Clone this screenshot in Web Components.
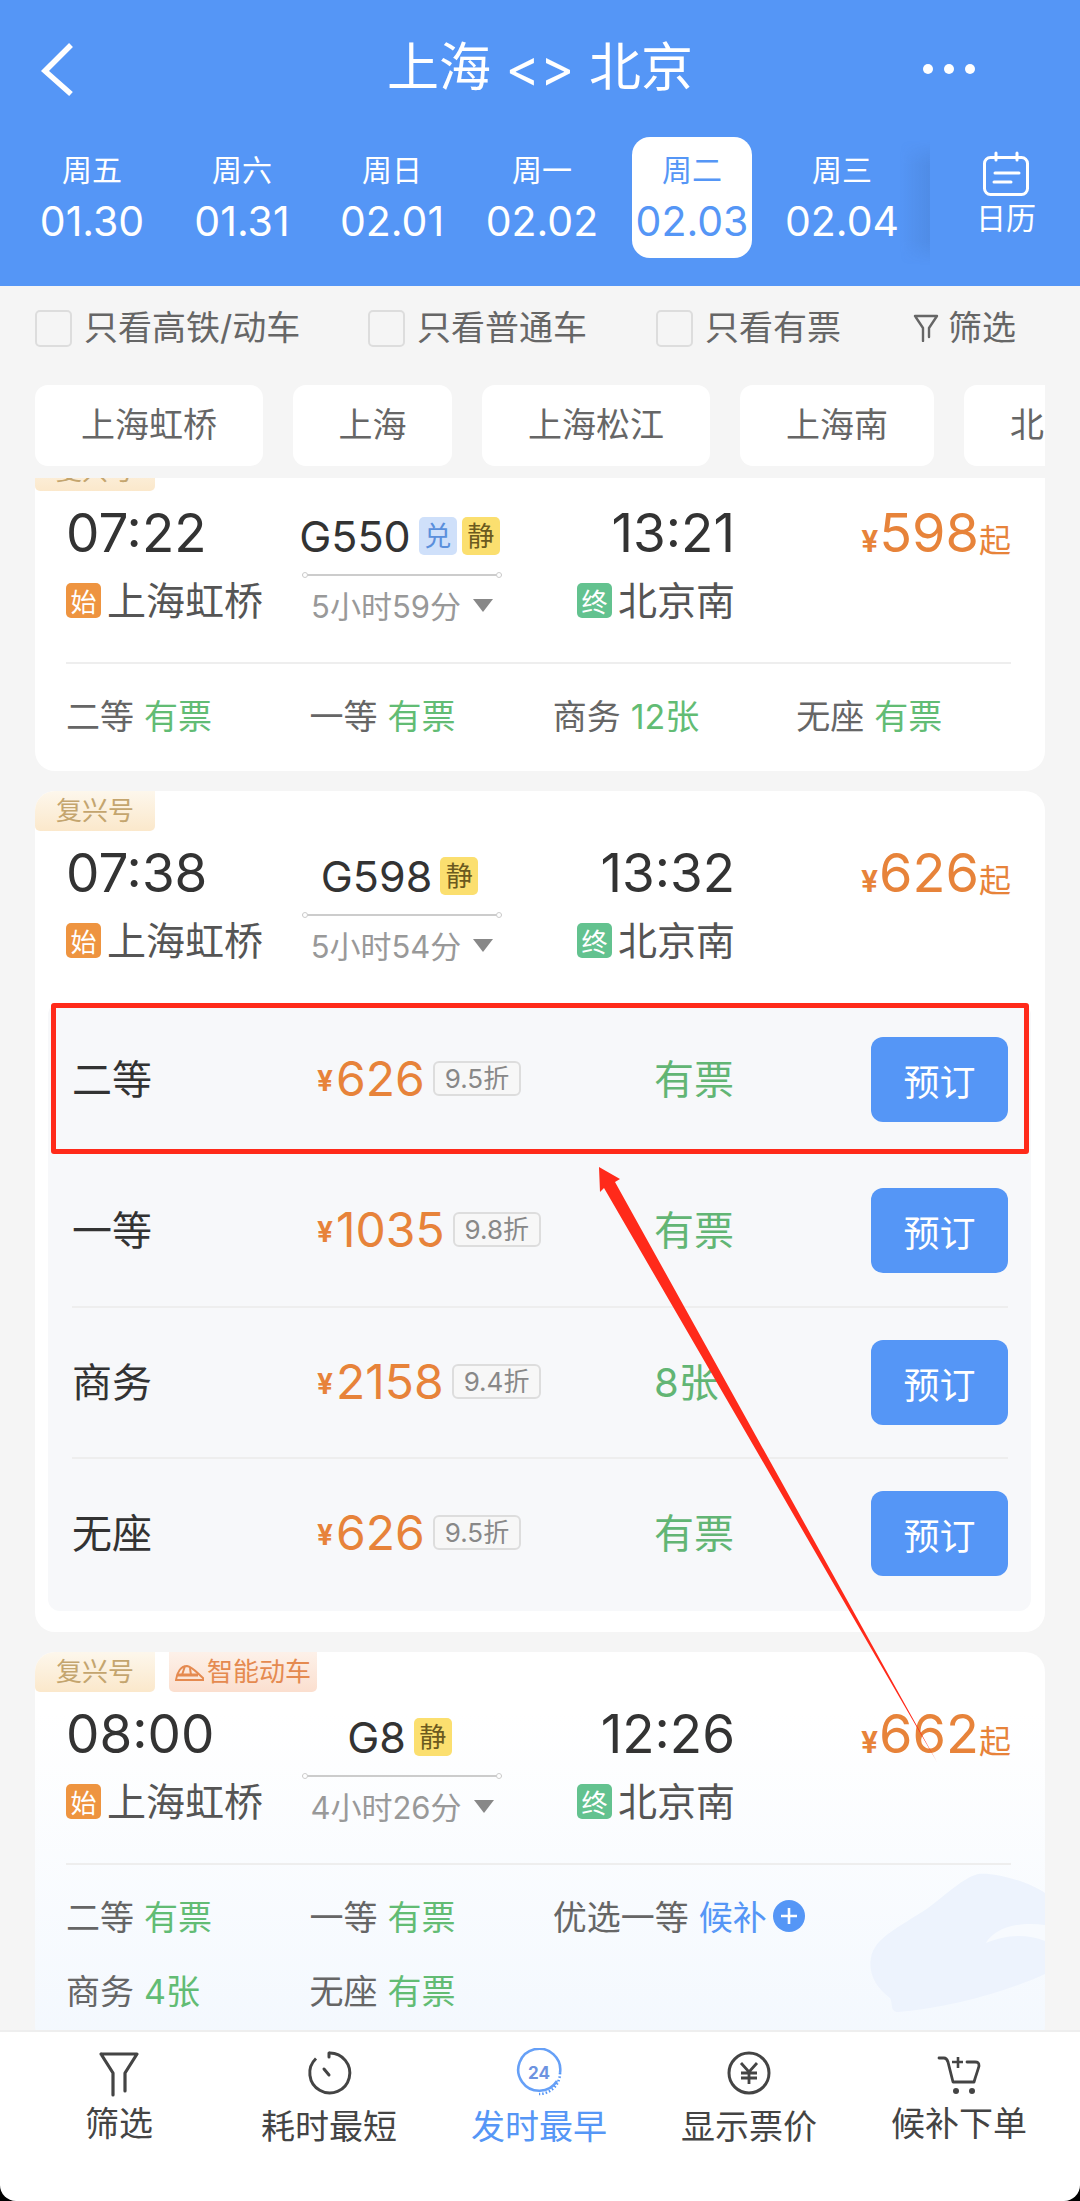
<!DOCTYPE html>
<html lang="zh">
<head>
<meta charset="utf-8">
<title>上海 <> 北京</title>
<style>
  html, body { margin: 0; padding: 0; background: #000; }
  body { width: 1080px; height: 2201px; overflow: hidden; font-family: Inter, "Noto Sans CJK SC", sans-serif; }
</style>
</head>
<body>
<train-app>
  <top-header slot="header">
    <date-tab week="周五" date="01.30"></date-tab>
    <date-tab week="周六" date="01.31"></date-tab>
    <date-tab week="周日" date="02.01"></date-tab>
    <date-tab week="周一" date="02.02"></date-tab>
    <date-tab week="周二" date="02.03" active></date-tab>
    <date-tab week="周三" date="02.04"></date-tab>
  </top-header>

  <filter-bar slot="filters"></filter-bar>

  <station-strip slot="stations">
    <station-chip style="width:228px">上海虹桥</station-chip>
    <station-chip style="width:159px">上海</station-chip>
    <station-chip style="width:228px">上海松江</station-chip>
    <station-chip style="width:194px">上海南</station-chip>
    <station-chip style="width:194px">北京南</station-chip>
  </station-strip>

  <train-card dep="07:22" no="G550" arr="13:21" dur="5小时59分" price="598" marks="兑,静" style="margin-top:-27px">
    <seat-grid>
      <seat-cell name="二等" left="有票"></seat-cell>
      <seat-cell name="一等" left="有票"></seat-cell>
      <seat-cell name="商务" left="12张"></seat-cell>
      <seat-cell name="无座" left="有票"></seat-cell>
    </seat-grid>
  </train-card>

  <train-card dep="07:38" no="G598" arr="13:32" dur="5小时54分" price="626" marks="静">
    <seat-panel>
      <seat-row name="二等" price="626" off="9.5折" left="有票"></seat-row>
      <seat-row name="一等" price="1035" off="9.8折" left="有票"></seat-row>
      <seat-row name="商务" price="2158" off="9.4折" left="8张"></seat-row>
      <seat-row name="无座" price="626" off="9.5折" left="有票"></seat-row>
    </seat-panel>
  </train-card>

  <train-card dep="08:00" no="G8" arr="12:26" dur="4小时26分" price="662" marks="静" smart>
    <seat-grid>
      <seat-cell name="二等" left="有票"></seat-cell>
      <seat-cell name="一等" left="有票"></seat-cell>
      <seat-cell name="优选一等" left="候补" wait></seat-cell>
      <seat-cell name="商务" left="4张" newrow></seat-cell>
      <seat-cell name="无座" left="有票"></seat-cell>
    </seat-grid>
  </train-card>

  <bottom-nav slot="nav">
    <nav-item icon="filter" raised>筛选</nav-item>
    <nav-item icon="clock">耗时最短</nav-item>
    <nav-item icon="early" active>发时最早</nav-item>
    <nav-item icon="yen">显示票价</nav-item>
    <nav-item icon="cart" raised>候补下单</nav-item>
  </bottom-nav>

  <red-annotation slot="overlay"></red-annotation>
</train-app>

<script>
const FONT = 'Inter, "Noto Sans CJK SC", sans-serif';
const BLUE = "#5596f6";

// small helper, every element here is template + open shadow root
function define(name, html, Base) {
  const tpl = document.createElement("template");
  tpl.innerHTML = html;
  class El extends (Base || HTMLElement) {
    constructor() {
      super();
      this.attachShadow({ mode: "open" });
      this.shadowRoot.appendChild(tpl.content.cloneNode(true));
    }
    connectedCallback() {
      if (this.render) this.render();
    }
    $(sel) {
      return this.shadowRoot.querySelector(sel);
    }
  }
  return El;
}

customElements.define("train-app", define("train-app", `
  <style>
    :host { display: block; position: relative; width: 1080px; height: 2201px; background: #000; font-family: ${FONT}; overflow: hidden; }
    .page { display: flex; flex-direction: column; height: 2201px; }
    .main { background: #f5f5f5; display: flex; flex-direction: column; flex: none; height: 2030px; overflow: hidden; }
    .list { flex: 1; min-height: 0; margin: 12px 35px 0; overflow: hidden; display: flex; flex-direction: column; gap: 20px; }
  </style>
  <div class="page">
    <div class="main">
      <slot name="header"></slot>
      <slot name="filters"></slot>
      <slot name="stations"></slot>
      <div class="list"><slot></slot></div>
    </div>
    <slot name="nav"></slot>
  </div>
  <slot name="overlay"></slot>
`));

customElements.define("top-header", define("top-header", `
  <style>
    :host { display: block; height: 286px; background: ${BLUE}; color: #fff; flex: none; }
    .bar { height: 137px; display: flex; align-items: center; justify-content: space-between; padding: 0 105px 0 36px; box-sizing: border-box; }
    .back { width: 42px; height: 56px; display: block; }
    .title { font-size: 52px; line-height: 60px; position: absolute; left: 0; right: 0; text-align: center; margin-top: -2px; }
    .dots { display: flex; gap: 11px; }
    .dots i { width: 10px; height: 10px; border-radius: 50%; background: #fff; display: block; }
    .dates { display: flex; padding-left: 32px; gap: 30px; height: 121px; align-items: center; }
    .cal { position: relative; width: 150px; height: 121px; margin-left: -2px; display: flex; flex-direction: column; align-items: center; box-sizing: border-box; padding: 13px 0 0 2px; flex: none; }
    .cal::before { content: ""; position: absolute; left: -30px; top: 3px; width: 30px; height: 125px; background: linear-gradient(90deg, rgba(50,85,140,0), rgba(50,85,140,.15)); -webkit-mask-image: linear-gradient(transparent, #000 20%, #000 80%, transparent); }
    .cal svg { display: block; }
    .cal span { font-size: 30px; line-height: 40px; white-space: nowrap; }
  </style>
  <div class="bar">
    <svg class="back" viewBox="0 0 42 56" fill="none" stroke="#fff" stroke-width="5.5"><path d="M35 4 L9 30 L35 53"/></svg>
    <div class="title">上海 &lt;&gt; 北京</div>
    <div class="dots"><i></i><i></i><i></i></div>
  </div>
  <div class="dates">
    <slot></slot>
    <div class="cal">
      <svg width="50" height="48" viewBox="0 0 50 48" fill="none" stroke="#fff" stroke-width="3" stroke-linecap="round">
        <rect x="3.500" y="7.500" width="43" height="37" rx="6"/>
        <path d="M15 3v7M36 3v7M14 23h24M13 32h17"/>
      </svg>
      <span>日历</span>
    </div>
  </div>
`));

class DateTab extends define("date-tab", `
  <style>
    :host { display: flex; flex-direction: column; align-items: center; width: 120px; height: 121px; border-radius: 18px; flex: none; color: #fff; }
    :host([active]) { background: #fff; color: ${BLUE}; }
    .w { font-size: 30px; line-height: 36px; margin-top: 15px; }
    .d { font-size: 41px; line-height: 46px; margin-top: 10px; white-space: nowrap; }
  </style>
  <div class="w"></div><div class="d"></div>
`) {
  render() {
    this.$(".w").textContent = this.getAttribute("week");
    this.$(".d").textContent = this.getAttribute("date");
  }
}
customElements.define("date-tab", DateTab);

customElements.define("filter-bar", define("filter-bar", `
  <style>
    :host { display: flex; height: 84px; align-items: center; flex: none; font-size: 34px; color: #666; padding-left: 35px; }
    .c { display: flex; align-items: center; gap: 12px; white-space: nowrap; flex: none; }
    .c i { display: block; width: 37px; height: 37px; box-sizing: border-box; border: 2px solid #ddd; border-radius: 5px; }
    .c span, .f span { padding-bottom: 6px; }
    .f { display: flex; align-items: center; gap: 9px; white-space: nowrap; flex: none; }
    .w1 { width: 333px; }
    .w2 { width: 288px; }
    .w3 { width: 257px; }
  </style>
  <div class="c w1"><i></i><span>只看高铁/动车</span></div>
  <div class="c w2"><i></i><span>只看普通车</span></div>
  <div class="c w3"><i></i><span>只看有票</span></div>
  <div class="f">
    <svg width="26" height="28" viewBox="0 0 26 28" fill="none" stroke="#666" stroke-width="2.400" stroke-linejoin="round" stroke-linecap="round"><path d="M2 2H24L16 14V23M10 27V14L2 2"/></svg>
    <span>筛选</span>
  </div>
`));

customElements.define("station-strip", define("station-strip", `
  <style>
    :host { display: block; flex: none; margin: 15px 35px 0; width: 1010px; overflow: hidden; }
    .row { display: flex; gap: 30px; height: 81px; }
  </style>
  <div class="row"><slot></slot></div>
`));

customElements.define("station-chip", define("station-chip", `
  <style>
    :host { display: flex; flex: none; align-items: center; justify-content: center; box-sizing: border-box; padding-bottom: 6px; height: 81px; background: #fff; border-radius: 13px; font-size: 34px; color: #666; white-space: nowrap; }
  </style>
  <slot></slot>
`));

class TrainCard extends define("train-card", `
  <style>
    :host { display: block; flex: none; position: relative; background: #fff; border-radius: 20px; overflow: hidden; }
    :host([smart]) { background: linear-gradient(#fff 60px, #f3f8fe 400px); }
    .tags { display: flex; height: 40px; gap: 14px; position: relative; }
    .tag { display: flex; align-items: center; justify-content: center; font-size: 26px; box-sizing: border-box; padding-bottom: 5px; height: 40px; border-radius: 0 0 5px 5px; white-space: nowrap; }
    .fx { width: 120px; color: #c4a56e; background: linear-gradient(#fdf7ec, #fbe8cb); }
    .zn { width: 148px; color: #e58a50; background: linear-gradient(#fdf1e9, #fbdfcf); gap: 3px; display: none; }
    .zn svg { margin-top: 6px; }
    :host([smart]) .zn { display: flex; }
    .top { display: grid; grid-template-columns: 236px 200px 233px 310px; padding-left: 31px; margin-top: 17px; height: 154px; position: relative; }
    .time { font-size: 53px; line-height: 50px; height: 50px; color: #333; white-space: nowrap; }
    .station { display: flex; align-items: center; height: 40px; margin-top: 23px; font-size: 39px; color: #555; white-space: nowrap; gap: 6px; }
    .station span { padding-bottom: 6px; }
    .station i { font-style: normal; display: flex; align-items: center; justify-content: center; width: 35px; height: 35px; border-radius: 5px; color: #fff; font-size: 26px; margin-top: -2px; }
    .dep { background: #ee9440; }
    .end { background: #63c28f; }
    .arr { display: flex; flex-direction: column; align-items: flex-end; }
    .mid { display: flex; flex-direction: column; align-items: center; }
    .no { display: flex; align-items: center; height: 56px; font-size: 43px; color: #333; margin-right: 5px; white-space: nowrap; }
    .m { display: flex; align-items: center; justify-content: center; box-sizing: border-box; padding-bottom: 3px; width: 38px; height: 38px; border-radius: 5px; font-size: 27px; background: #fbdf6f; color: #6b5a20; margin-left: 8px; }
    .m + .m { margin-left: 5px; }
    .m.dui { background: #cfe0fa; color: #5a8fdc; }
    .line { width: 200px; height: 2px; background: #ccc; margin-top: 10px; position: relative; }
    .line::before, .line::after { content: ""; position: absolute; top: -2px; width: 6px; height: 6px; box-sizing: border-box; border: 1px solid #ccc; border-radius: 50%; background: #fff; }
    .line::before { left: 0; }
    .line::after { right: 0; }
    .dur { display: flex; align-items: center; gap: 12px; height: 40px; font-size: 31px; color: #999; margin-top: 11px; white-space: nowrap; }
    .dur span { padding-bottom: 5px; }
    .dur b { display: block; width: 0; height: 0; border-left: 10px solid transparent; border-right: 10px solid transparent; border-top: 13px solid #888; margin-top: -4px; }
    .price { display: flex; justify-content: flex-end; align-items: baseline; padding-right: 34px; height: 50px; line-height: 50px; color: #e7833a; white-space: nowrap; }
    .price small { font-size: 30px; font-weight: 700; margin-right: 1px; }
    .price span { font-size: 54px; }
    .price em { font-style: normal; font-size: 32px; }
    .bg { display: none; position: absolute; right: 0; top: 221px; }
    :host([smart]) .bg { display: block; }
    .slot { position: relative; display: block; }
  </style>
  <svg class="bg" width="177" height="140" viewBox="0 0 177 140"><path d="M110 1C125 -1 160 8 177 20L177 101C140 118 80 135 30 139C22 139 25 130 22 125C8 115 0 100 3 85C6 65 30 55 60 35C80 20 95 5 110 1Z" fill="#edf3fd"/><path d="M118 70C126 56 148 48 177 52L177 68C158 60 136 62 118 70Z" fill="#f7fafe"/></svg>
  <div class="tags">
    <div class="tag fx">复兴号</div>
    <div class="tag zn">
      <svg width="29" height="18" viewBox="0 0 29 18" fill="none" stroke="#e58a50" stroke-width="2"><path d="M1 16C2 8 6 2 12 2C18 3 23 10 28 14V16Z"/><path d="M2 11H23" stroke-width="3"/><path d="M10 2L7 11M15 4L16 11"/></svg>
      智能动车
    </div>
  </div>
  <div class="top">
    <div>
      <div class="time d"></div>
      <div class="station"><i class="dep">始</i><span>上海虹桥</span></div>
    </div>
    <div class="mid">
      <div class="no"></div>
      <div class="line"></div>
      <div class="dur"><span></span><b></b></div>
    </div>
    <div class="arr">
      <div class="time a"></div>
      <div class="station"><i class="end">终</i><span>北京南</span></div>
    </div>
    <div class="price"><small>¥</small><span></span><em>起</em></div>
  </div>
  <slot class="slot"></slot>
`) {
  render() {
    this.$(".time.d").textContent = this.getAttribute("dep");
    this.$(".time.a").textContent = this.getAttribute("arr");
    this.$(".dur span").textContent = this.getAttribute("dur");
    this.$(".price span").textContent = this.getAttribute("price");
    const no = this.$(".no");
    no.textContent = this.getAttribute("no");
    this.getAttribute("marks").split(",").forEach((m) => {
      const d = document.createElement("div");
      d.className = m === "兑" ? "m dui" : "m";
      d.textContent = m;
      no.appendChild(d);
    });
  }
}
customElements.define("train-card", TrainCard);

customElements.define("seat-grid", define("seat-grid", `
  <style>
    :host { display: block; margin: 0 34px 0 31px; border-top: 2px solid #eee; padding: 15px 0 18px; }
    .g { display: grid; grid-template-columns: repeat(4, 243.4px); grid-auto-rows: 74px; }
  </style>
  <div class="g"><slot></slot></div>
`));

class SeatCell extends define("seat-cell", `
  <style>
    :host { display: flex; align-items: center; gap: 10px; font-size: 34px; color: #666; white-space: nowrap; padding-bottom: 3px; box-sizing: border-box; }
    :host([newrow]) { grid-column: 1; }
    :host([wait]) { grid-column: span 2; }
    .v { color: #62bc74; }
    :host([wait]) .v { color: ${BLUE}; }
    svg { display: none; margin-left: -4px; }
    :host([wait]) svg { display: block; }
  </style>
  <span class="n"></span><span class="v"></span>
  <svg width="32" height="32" viewBox="0 0 32 32"><circle cx="16" cy="16" r="16" fill="${BLUE}"/><path d="M8 16H24M16 8V24" stroke="#fff" stroke-width="2.600"/></svg>
`) {
  render() {
    this.$(".n").textContent = this.getAttribute("name");
    this.$(".v").textContent = this.getAttribute("left");
  }
}
customElements.define("seat-cell", SeatCell);

customElements.define("seat-panel", define("seat-panel", `
  <style>
    :host { display: block; margin: 1px 14px 21px 13px; background: #f7f8fa; border-radius: 12px; padding: 1px 0 3px; }
  </style>
  <slot></slot>
`));

class SeatRow extends define("seat-row", `
  <style>
    :host { display: block; padding: 0 23px 0 24px; }
    .r { display: grid; grid-template-columns: 245px 337px 217px 137px; height: 151px; align-items: center; box-sizing: border-box; }
    :host(:nth-child(n+3)) .r { border-top: 2px solid #eeeeee; height: 151px; }
    .n { font-size: 40px; color: #333; padding-bottom: 6px; }
    .p { display: flex; align-items: center; color: #e7833a; white-space: nowrap; padding-bottom: 3px; }
    .p small { font-size: 28px; font-weight: 700; margin-top: 5px; margin-right: 3px; }
    .p span { font-size: 48px; }
    .off { margin-left: 8px; display: flex; align-items: center; padding: 0 10px 3px; height: 35px; border: 2px solid #ddd; border-radius: 6px; box-sizing: border-box; font-size: 26px; color: #888; background: #f7f7f7; }
    .l { font-size: 40px; color: #62b574; white-space: nowrap; padding-bottom: 6px; }
    button { width: 137px; height: 85px; border: 0; padding: 0; border-radius: 12px; background: ${BLUE}; color: #fff; font: 36px ${FONT}; }
  </style>
  <div class="r">
    <div class="n"></div>
    <div class="p"><small>¥</small><span></span><div class="off"></div></div>
    <div class="l"></div>
    <button>预订</button>
  </div>
`) {
  render() {
    this.$(".n").textContent = this.getAttribute("name");
    this.$(".p span").textContent = this.getAttribute("price");
    this.$(".off").textContent = this.getAttribute("off");
    this.$(".l").textContent = this.getAttribute("left");
  }
}
customElements.define("seat-row", SeatRow);

customElements.define("bottom-nav", define("bottom-nav", `
  <style>
    :host { display: grid; grid-template-columns: repeat(5, 210px); padding-left: 14px; height: 171px; box-sizing: border-box; background: #fff; border-top: 2px solid #eee; border-radius: 0 0 16px 16px; flex: none; }
  </style>
  <slot></slot>
`));

const NAV_ICONS = {
  filter: `<path d="M7 6H43L31 25V43M19 47V25L7 6" fill="none" stroke="#444" stroke-width="3.200" stroke-linejoin="round" stroke-linecap="round"/>`,
  clock: `<path d="M25 5A20 20 0 1 1 12 10.500" fill="none" stroke="#444" stroke-width="3"/><path d="M25 5V9M20 21L25 27" fill="none" stroke="#444" stroke-width="3" stroke-linecap="round"/>`,
  early: `<path d="M43 33A21 21 0 1 1 46 25" fill="none" stroke="${BLUE}" stroke-width="2.600" opacity=".9"/><path d="M46 25A21 21 0 0 1 25 46" fill="none" stroke="${BLUE}" stroke-width="2.600" stroke-dasharray="1.500 2"/><text x="25" y="31" text-anchor="middle" font-size="17" font-weight="700" font-family="Inter, sans-serif" fill="#6d93e0">24</text>`,
  yen: `<circle cx="25" cy="25" r="20" fill="none" stroke="#444" stroke-width="3"/><path d="M17 15L25 24L33 15M25 24V36M17 25H33M17 30H33" fill="none" stroke="#444" stroke-width="2.800"/>`,
  cart: `<path d="M5 10H10C12 10 13 11 14 14L19 34H40C42 27 44 22 45 18C45 15 44 14 41 14H33" fill="none" stroke="#444" stroke-width="2.800" stroke-linecap="round" stroke-linejoin="round"/><path d="M24 9V20M18 14H29" stroke="#444" stroke-width="2.600"/><circle cx="22" cy="43" r="3" fill="#444"/><circle cx="38" cy="43" r="3" fill="#444"/>`,
};

class NavItem extends define("nav-item", `
  <style>
    :host { display: flex; flex-direction: column; align-items: center; color: #444; }
    :host([active]) { color: ${BLUE}; }
    svg { margin-top: 16px; display: block; }
    .t { font-size: 34px; line-height: 44px; margin-top: 7px; white-space: nowrap; }
    :host([raised]) .t { margin-top: 4px; }
  </style>
  <svg width="50" height="50" viewBox="0 0 50 50"></svg>
  <div class="t"><slot></slot></div>
`) {
  render() {
    this.$("svg").innerHTML = NAV_ICONS[this.getAttribute("icon")];
  }
}
customElements.define("nav-item", NavItem);

customElements.define("red-annotation", define("red-annotation", `
  <style>
    :host { display: block; position: absolute; left: 0; top: 0; width: 1080px; height: 2201px; pointer-events: none; }
    .box { position: absolute; left: 51px; top: 1003px; width: 978px; height: 151px; box-sizing: border-box; border: 5px solid #ff2a1a; border-radius: 3px; }
    svg { position: absolute; left: 0; top: 0; }
  </style>
  <div class="box"></div>
  <svg width="1080" height="2201" viewBox="0 0 1080 2201"><polygon points="599,1167 620,1179 615,1182 937,1762 604,1188 600,1192" fill="#ff2a1a"/></svg>
`));
</script>
</body>
</html>
